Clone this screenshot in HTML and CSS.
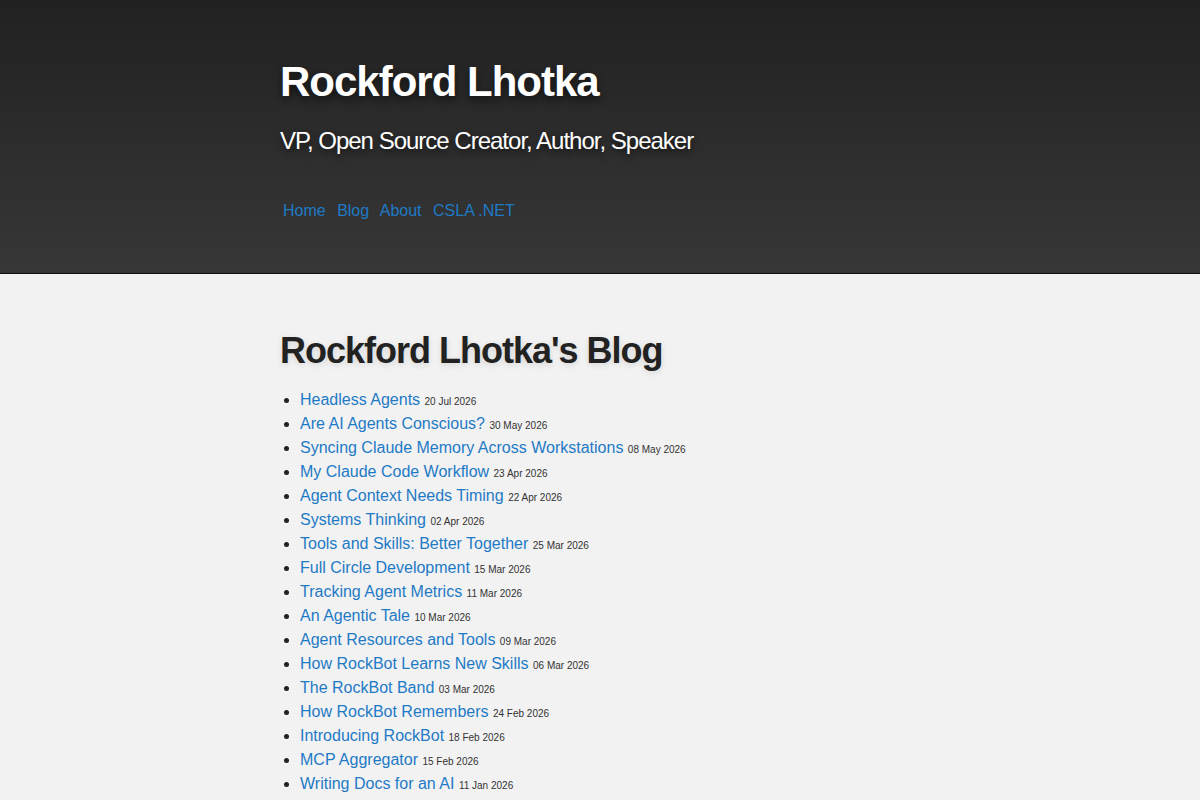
FILE: index.html
```html
<!DOCTYPE html>
<html>
<head>
<meta charset="utf-8">
<title>Rockford Lhotka's Blog</title>
<link rel="stylesheet" href="styles.css">
</head>
<body>

<header class="site-header">
  <div class="inner">
    <h1 class="site-title">Rockford Lhotka</h1>
    <h2 class="site-tagline">VP, Open Source Creator, Author, Speaker</h2>
    <nav class="site-nav">
      <a href="#">Home</a>
      <a href="#">Blog</a>
      <a href="#">About</a>
      <a href="#">CSLA .NET</a>
    </nav>
  </div>
</header>

<main class="inner content">
  <h1 class="page-title">Rockford Lhotka's Blog</h1>
  <ul class="post-list">
    <li><a href="#">Headless Agents</a> <small>20 Jul 2026</small></li>
    <li><a href="#">Are AI Agents Conscious?</a> <small>30 May 2026</small></li>
    <li><a href="#">Syncing Claude Memory Across Workstations</a> <small>08 May 2026</small></li>
    <li><a href="#">My Claude Code Workflow</a> <small>23 Apr 2026</small></li>
    <li><a href="#">Agent Context Needs Timing</a> <small>22 Apr 2026</small></li>
    <li><a href="#">Systems Thinking</a> <small>02 Apr 2026</small></li>
    <li><a href="#">Tools and Skills: Better Together</a> <small>25 Mar 2026</small></li>
    <li><a href="#">Full Circle Development</a> <small>15 Mar 2026</small></li>
    <li><a href="#">Tracking Agent Metrics</a> <small>11 Mar 2026</small></li>
    <li><a href="#">An Agentic Tale</a> <small>10 Mar 2026</small></li>
    <li><a href="#">Agent Resources and Tools</a> <small>09 Mar 2026</small></li>
    <li><a href="#">How RockBot Learns New Skills</a> <small>06 Mar 2026</small></li>
    <li><a href="#">The RockBot Band</a> <small>03 Mar 2026</small></li>
    <li><a href="#">How RockBot Remembers</a> <small>24 Feb 2026</small></li>
    <li><a href="#">Introducing RockBot</a> <small>18 Feb 2026</small></li>
    <li><a href="#">MCP Aggregator</a> <small>15 Feb 2026</small></li>
    <li><a href="#">Writing Docs for an AI</a> <small>11 Jan 2026</small></li>
  </ul>
</main>

</body>
</html>
```

FILE: styles.css
```css
*, *:before, *:after {
  box-sizing: border-box;
}

body {
  margin: 0;
  background: #f2f2f2;
  color: #222;
  font: 16px/1.5 "Liberation Sans", Arial, sans-serif;
}

a {
  color: #1e7ac6;
  text-decoration: none;
}

.inner {
  width: 640px;
  margin: 0 auto;
}

.site-header {
  height: 274px;
  background: linear-gradient(to bottom, #212121 0%, #373737 100%);
  border-bottom: 1px solid #111;
  padding-top: 56px;
}

.site-title {
  margin: 0;
  color: #fff;
  font-size: 42px;
  line-height: 52px;
  font-weight: bold;
  letter-spacing: -1px;
  text-shadow: 0 4px 8px rgba(0, 0, 0, .6);
}

.site-tagline {
  margin: 18px 0 0;
  color: #fff;
  font-size: 24px;
  line-height: 30px;
  font-weight: normal;
  letter-spacing: -1px;
  text-shadow: 0 3px 6px rgba(0, 0, 0, .6);
}

.site-nav {
  margin-top: 43px;
  padding-left: 3px;
  font-size: 16px;
  line-height: 24px;
}

.site-nav a {
  margin-right: 7px;
}

.content {
  padding-top: 54px;
}

.page-title {
  margin: 0 0 14px;
  font-size: 36px;
  line-height: 46px;
  font-weight: bold;
  letter-spacing: -1px;
  color: #222;
  text-shadow: 0 2px 6px rgba(0, 0, 0, .12);
}

.post-list {
  margin: 0;
  padding-left: 20px;
}

.post-list li {
  height: 24px;
  line-height: 24px;
}

.post-list small {
  font-size: 10px;
  line-height: 1;
  color: #333;
}
```
